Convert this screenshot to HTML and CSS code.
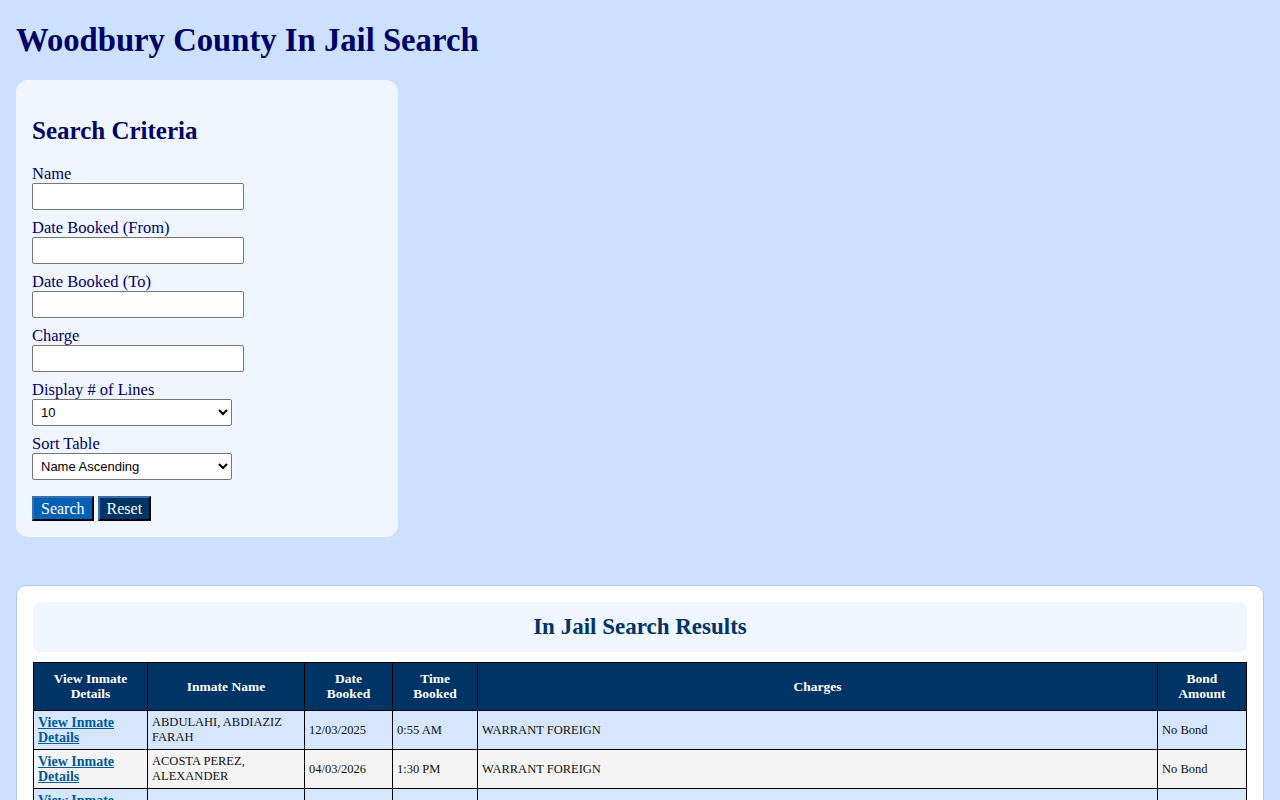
FILE: index.html
```html
<!DOCTYPE html>
<html lang="en">
<head>
    <meta charset="UTF-8">
    <meta name="viewport" content="width=device-width, initial-scale=1.0">
    <title>Woodbury County In Jail Search</title>
    <link rel="stylesheet" href="styles.css">
</head>
<body>

    <h1 class="page-title">Woodbury County In Jail Search</h1>

    <form class="search-box" id="searchForm">
        <h2>Search Criteria</h2>

        <label for="name">Name</label>
        <input type="text" id="name" class="field">

        <label for="dateFrom">Date Booked (From)</label>
        <input type="text" id="dateFrom" class="field">

        <label for="dateTo">Date Booked (To)</label>
        <input type="text" id="dateTo" class="field">

        <label for="charge">Charge</label>
        <input type="text" id="charge" class="field">

        <label for="lines">Display # of Lines</label>
        <select id="lines" class="pick">
            <option>10</option>
            <option>25</option>
            <option>50</option>
            <option>100</option>
        </select>

        <label for="sort">Sort Table</label>
        <select id="sort" class="pick">
            <option>Name Ascending</option>
            <option>Name Descending</option>
            <option>Date Booked Ascending</option>
            <option>Date Booked Descending</option>
        </select>

        <div class="buttons">
            <button type="submit" class="btn btn-search">Search</button>
            <button type="reset" class="btn btn-reset">Reset</button>
        </div>
    </form>

    <div class="results">
        <div class="results-head">
            <h2>In Jail Search Results</h2>
        </div>

        <table class="inmates">
            <thead>
                <tr>
                    <th class="c-link">View Inmate<br>Details</th>
                    <th class="c-name">Inmate Name</th>
                    <th class="c-date">Date<br>Booked</th>
                    <th class="c-time">Time<br>Booked</th>
                    <th>Charges</th>
                    <th class="c-bond">Bond<br>Amount</th>
                </tr>
            </thead>
            <tbody>
                <tr>
                    <td class="details"><a href="#">View Inmate Details</a></td>
                    <td>ABDULAHI, ABDIAZIZ FARAH</td>
                    <td>12/03/2025</td>
                    <td>0:55 AM</td>
                    <td>WARRANT FOREIGN</td>
                    <td>No Bond</td>
                </tr>
                <tr>
                    <td class="details"><a href="#">View Inmate Details</a></td>
                    <td>ACOSTA PEREZ, ALEXANDER</td>
                    <td>04/03/2026</td>
                    <td>1:30 PM</td>
                    <td>WARRANT FOREIGN</td>
                    <td>No Bond</td>
                </tr>
                <tr>
                    <td class="details"><a href="#">View Inmate Details</a></td>
                    <td>ALVAREZ, JOSE LUIS</td>
                    <td>03/21/2026</td>
                    <td>4:12 PM</td>
                    <td>PROBATION VIOLATION</td>
                    <td>$5,000.00</td>
                </tr>
            </tbody>
        </table>
    </div>

</body>
</html>
```

FILE: styles.css
```css
/* Jail search page */
body {
    font-family: "Liberation Serif", "DejaVu Serif", serif;
    background-color: #cce0ff;
    color: #000066;
    margin: 0;
    padding: 0 16px 16px;
}

.page-title {
    font-size: 32.7px;
    font-weight: bold;
    color: #000066;
    margin: 0;
    padding: 21px 0 21px;
    line-height: 38px;
}

/* Search criteria panel */
.search-box {
    width: 350px;
    background-color: #f0f6ff;
    border-radius: 12px;
    padding: 16px 16px 16px;
    display: flex;
    flex-direction: column;
    align-items: flex-start;
}

.search-box h2 {
    font-size: 25px;
    color: #000066;
    margin: 20px 0 18px;
    line-height: 30px;
}

.search-box label {
    font-size: 16.5px;
    line-height: 19px;
}

.field {
    width: 212px;
    height: 27px;
    box-sizing: border-box;
    border: 1px solid #767676;
    border-radius: 2px;
    background: #fff;
    margin: 0 0 8px;
}

.pick {
    width: 200px;
    height: 27px;
    box-sizing: border-box;
    border: 1px solid #767676;
    border-radius: 2px;
    background: #fff;
    font-family: "Liberation Sans", Arial, sans-serif;
    font-size: 13px;
    padding-left: 4px;
    margin: 0 0 8px;
}

.buttons {
    display: flex;
    gap: 4px;
    margin-top: 8px;
}

.btn {
    font-family: "Liberation Serif", "DejaVu Serif", serif;
    font-size: 16px;
    line-height: 17px;
    color: #fff;
    padding: 2px 7px;
    border: 2px solid #000;
    border-top-color: #3a6ea8;
    border-left-color: #3a6ea8;
    cursor: pointer;
}

.btn-search {
    background-color: #0060b6;
}

.btn-reset {
    background-color: #003366;
}

/* Results panel */
.results {
    margin-top: 48px;
    background-color: #fff;
    border: 1px solid #b8c8e0;
    border-radius: 10px;
    padding: 16px 16px 0;
}

.results-head {
    background-color: #f0f6ff;
    border-radius: 8px;
    text-align: center;
    padding: 10px 0;
    margin-bottom: 10px;
}

.results-head h2 {
    margin: 0;
    font-size: 23px;
    line-height: 30px;
    color: #003366;
}

.inmates {
    width: 100%;
    border-collapse: collapse;
    font-size: 12.5px;
    color: #111;
}

.inmates th,
.inmates td {
    border: 1px solid #000;
}

.inmates th {
    background-color: #003366;
    color: #fff;
    font-weight: bold;
    font-size: 13.5px;
    line-height: 15px;
    padding: 8px 4px 9px;
}

.inmates td {
    padding: 4px 4px;
    line-height: 15px;
    height: 30px;
}

.inmates td.details {
    font-size: 14px;
}

.inmates tbody tr:nth-child(odd) {
    background-color: #d6e6ff;
}

.inmates tbody tr:nth-child(even) {
    background-color: #f4f4f4;
}

.inmates a {
    color: #005a9c;
    font-weight: bold;
}

.c-link { width: 105px; }
.c-name { width: 148px; }
.c-date { width: 79px; }
.c-time { width: 76px; }
.c-bond { width: 80px; }
```
